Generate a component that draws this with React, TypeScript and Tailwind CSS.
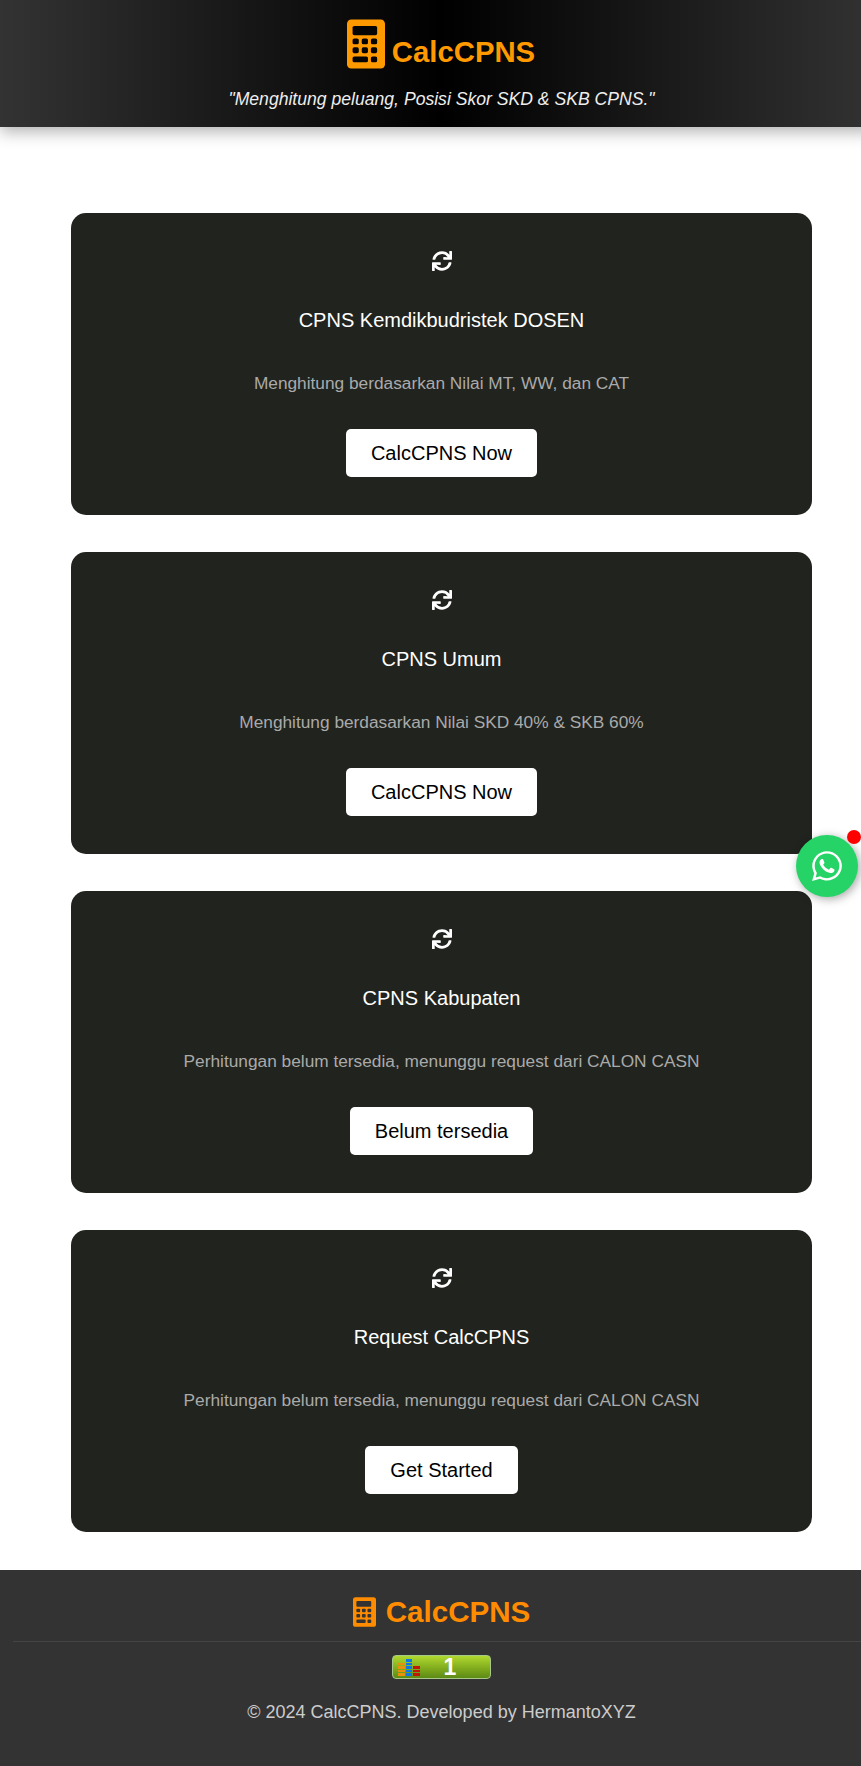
import { FaSync } from 'react-icons/fa';
import { FaWhatsapp } from 'react-icons/fa6';

const cards = [
    { title: 'CPNS Kemdikbudristek DOSEN', desc: 'Menghitung berdasarkan Nilai MT, WW, dan CAT', label: 'CalcCPNS Now' },
    { title: 'CPNS Umum', desc: 'Menghitung berdasarkan Nilai SKD 40% & SKB 60%', label: 'CalcCPNS Now' },
    { title: 'CPNS Kabupaten', desc: 'Perhitungan belum tersedia, menunggu request dari CALON CASN', label: 'Belum tersedia' },
    { title: 'Request CalcCPNS', desc: 'Perhitungan belum tersedia, menunggu request dari CALON CASN', label: 'Get Started' },
];

const keyRows = [58, 85];
const keyCols = [17, 45, 73];

// the logo glyph: solid body, dark screen and keys drawn on top with the backing colour
const CalcIcon = (props: { className: string; back: string }) => {
    return (
        <svg viewBox="0 0 116 150" className={props.className}>
            <rect x="0" y="0" width="116" height="150" rx="13" fill="currentColor" />
            <rect x="17" y="20" width="75" height="28" rx="5" fill={props.back} />
            {keyRows.map((y) =>
                keyCols.map((x) => (
                    <rect key={`${x}-${y}`} x={x} y={y} width="19" height="18" rx="5" fill={props.back} />
                ))
            )}
            <rect x="17" y="113" width="47" height="18" rx="5" fill={props.back} />
            <rect x="73" y="113" width="19" height="18" rx="5" fill={props.back} />
        </svg>
    );
};

const Card = (props: { title: string; desc: string; label: string }) => {
    return (
        <div className="flex h-[301.5px] flex-col items-center rounded-[15px] bg-[#21231e] pt-[37.5px] text-center">
            <FaSync className="text-[20px] text-white" />
            <h3 className="mt-[38.5px] text-[20px] leading-[23px] font-normal text-white">{props.title}</h3>
            <p className="mt-[41px] text-[17.3px] leading-[20px] text-[#aaaaaa]">{props.desc}</p>
            <a href="#" className="mt-[36px] flex h-[48px] items-center rounded-[5px] bg-white px-[25px] text-[20px] text-black">{props.label}</a>
        </div>
    );
};

const Badge = () => {
    const columns = [
        { color: '#e8920c', count: 4 },
        { color: '#0a78e6', count: 5 },
        { color: '#c01808', count: 3 },
    ];
    return (
        <div className="flex h-[24px] w-[99px] items-center rounded-[4px] border border-[#a8c888] bg-[linear-gradient(to_bottom,#b0d830,#8ab420_45%,#5d8a14)] pl-[5px]">
            <div className="flex h-[19px] items-end gap-[1px] pb-[1px]">
                {columns.map((c) => (
                    <div key={c.color} className="flex w-[6.5px] flex-col gap-[1px]">
                        {Array.from({ length: c.count }).map((_, i) => (
                            <div key={i} className="h-[2.5px]" style={{ backgroundColor: c.color }} />
                        ))}
                    </div>
                ))}
            </div>
            <span className="ml-[24px] text-[23px] leading-[22px] font-bold text-white">1</span>
        </div>
    );
};

export default function App() {
    return (
        <div className="relative w-full overflow-x-hidden bg-white font-['Liberation_Sans',Arial,sans-serif]">
            <div className="w-[883px]">
                <header className="flex h-[127px] flex-col items-center bg-[linear-gradient(to_right,#333333,#000000,#333333)] pt-[19px] shadow-[0_5px_15px_rgba(0,0,0,0.3)]">
                    <div className="flex items-end pr-[1px]">
                        <CalcIcon back="#050505" className="h-[50px] w-[38px] text-[#ff9900]" />
                        <span className="mb-[1px] ml-[7px] text-[29.3px] leading-[33px] font-bold text-[#ff9900]">CalcCPNS</span>
                    </div>
                    <p className="mt-[20px] text-[17.6px] leading-[20px] text-[#eeeeee] italic">"Menghitung peluang, Posisi Skor SKD &amp; SKB CPNS."</p>
                </header>

                <main className="flex flex-col gap-[37.5px] px-[71px] pt-[86px] pb-[38.5px]">
                    {cards.map((c) => (
                        <Card key={c.title} title={c.title} desc={c.desc} label={c.label} />
                    ))}
                </main>

                <footer className="flex h-[196px] flex-col items-center bg-[#333333] pt-[25px]">
                    <div className="flex items-center">
                        <CalcIcon back="#333333" className="h-[30px] w-[23px] text-[#ff8c00]" />
                        <span className="ml-[10px] text-[29.6px] leading-[33px] font-bold text-[#ff8c00]">CalcCPNS</span>
                    </div>
                    <div className="mt-[13px] mb-[13px] w-[857px] border-t border-[#444444]" />
                    <Badge />
                    <p className="mt-[23px] text-[18px] leading-[20px] text-[#cccccc]">© 2024 CalcCPNS. Developed by HermantoXYZ</p>
                </footer>
            </div>

            <a href="#" className="fixed top-[835px] right-[3px] flex h-[62px] w-[62px] items-center justify-center rounded-full bg-[#25d366] shadow-[2px_2px_10px_rgba(0,0,0,0.35)]">
                <FaWhatsapp className="text-[34px] text-white" />
            </a>
            <div className="fixed top-[830px] right-0 h-[14px] w-[14px] rounded-full bg-[#ff0000]" />
        </div>
    );
}
